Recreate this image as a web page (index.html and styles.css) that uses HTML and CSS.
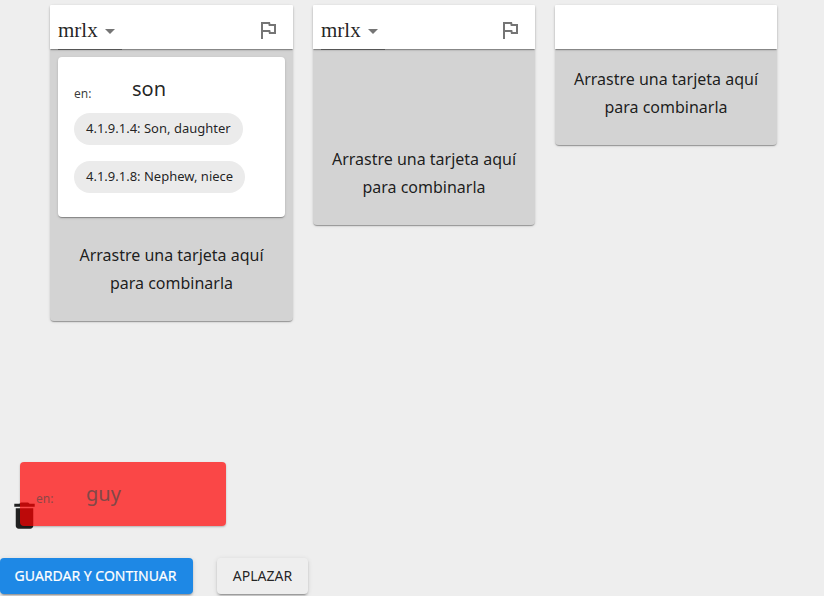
FILE: index.html
```
<!DOCTYPE html>
<html lang="es">
<head>
<meta charset="utf-8">
<title>Combinar duplicados</title>
<link rel="stylesheet" href="styles.css">
</head>
<body>
<main class="board">
  <section class="column first">
    <header class="bar">
      <div class="select">mrlx<svg viewBox="0 0 24 24"><path d="M7 10l5 5 5-5z"/></svg></div>
      <svg class="flag" viewBox="0 0 24 24"><path d="M12.36 6l.4 2H18v6h-3.36l-.4-2H7V6h5.36M14 4H5v17h2v-7h5.6l.4 2h7V6h-5.6L14 4z"/></svg>
    </header>
    <article class="card">
      <div class="gloss"><span class="lang">en:</span><span class="word">son</span></div>
      <div class="chip">4.1.9.1.4: Son, daughter</div>
      <div class="chip">4.1.9.1.8: Nephew, niece</div>
    </article>
    <p class="hint">Arrastre una tarjeta aquí<br>para combinarla</p>
  </section>
  <section class="column second">
    <header class="bar">
      <div class="select">mrlx<svg viewBox="0 0 24 24"><path d="M7 10l5 5 5-5z"/></svg></div>
      <svg class="flag" viewBox="0 0 24 24"><path d="M12.36 6l.4 2H18v6h-3.36l-.4-2H7V6h5.36M14 4H5v17h2v-7h5.6l.4 2h7V6h-5.6L14 4z"/></svg>
    </header>
    <p class="hint">Arrastre una tarjeta aquí<br>para combinarla</p>
  </section>
  <section class="column third">
    <header class="bar"></header>
    <p class="hint">Arrastre una tarjeta aquí<br>para combinarla</p>
  </section>
</main>
<div class="discard">
  <svg class="trash" viewBox="0 0 24 24"><path d="M6 19c0 1.1.9 2 2 2h8c1.1 0 2-.9 2-2V7H6v12zM19 4h-3.500l-1-1h-5l-1 1H5v2h14V4z"/></svg>
  <article class="dragged"><span class="lang">en:</span><span class="word">guy</span></article>
</div>
<footer class="actions">
  <button class="save">GUARDAR Y CONTINUAR</button>
  <button class="defer">APLAZAR</button>
</footer>
</body>
</html>
```
FILE: styles.css
```
* { box-sizing: border-box; }
body {
  margin: 0;
  height: 596px;
  overflow: hidden;
  background: #eee;
  color: rgba(0, 0, 0, .87);
  font-family: "Noto Sans", sans-serif;
  display: flex;
  flex-direction: column;
}
.board {
  display: flex;
  flex-shrink: 0;
  align-items: flex-start;
  gap: 20px;
  height: 462px;
  padding: 5px 0 0 50px;
}
.column {
  width: 222px;
  background: #d3d3d3;
  border-radius: 4px;
  box-shadow: 0 2px 1px -1px rgba(0,0,0,.2), 0 1px 1px rgba(0,0,0,.14), 0 1px 3px rgba(0,0,0,.12);
}
.first { width: 243px; height: 316px; }
.second { height: 220px; }
.third { height: 140px; }
.bar {
  display: flex;
  justify-content: space-between;
  align-items: flex-end;
  height: 44px;
  padding: 0 13px 0 8px;
  background: #fff;
  border-radius: 1px 1px 0 0;
  box-shadow: 0 2px 1px -1px rgba(0,0,0,.2), 0 1px 1px rgba(0,0,0,.14), 0 1px 3px rgba(0,0,0,.12);
}
.select {
  display: flex;
  align-items: center;
  height: 38px;
  width: 64px;
  margin-bottom: -1px;
  border-bottom: 1px solid #555;
  font: 21px "Liberation Serif", serif;
}
.select svg { width: 24px; height: 24px; fill: #757575; }
.flag { width: 24px; height: 24px; margin-bottom: 7px; fill: #757575; }
.card {
  margin: 8px 8px 0;
  height: 160px;
  padding: 16px;
  background: #fff;
  border-radius: 4px;
  box-shadow: 0 2px 1px -1px rgba(0,0,0,.2), 0 1px 1px rgba(0,0,0,.14), 0 1px 3px rgba(0,0,0,.12);
}
.gloss { display: flex; height: 40px; line-height: 32px; }
.lang { width: 58px; padding-top: 5px; font-size: 12px; opacity: .9; }
.word { font-size: 20px; }
.chip {
  width: max-content;
  height: 32px;
  padding: 0 12px;
  margin-bottom: 16px;
  border-radius: 16px;
  background: #ebebeb;
  font-size: 13px;
  line-height: 30px;
}
.hint { margin: 24px 0 0; text-align: center; font-size: 16px; line-height: 28px; }
.second .hint { margin-top: 96px; }
.third .hint { margin-top: 16px; }
.discard { position: relative; flex-shrink: 0; height: 96px; padding-left: 20px; }
.trash { position: absolute; left: 7px; top: 36px; width: 35px; height: 35px; fill: #212121; }
.dragged {
  position: relative;
  display: flex;
  width: 206px;
  height: 64px;
  padding: 16px;
  line-height: 32px;
  border-radius: 4px;
  background: rgba(255, 0, 0, .7);
  box-shadow: 0 1px 2px rgba(0,0,0,.25);
  color: #824848;
}
.dragged .lang { width: 50px; }
.actions { display: flex; flex-shrink: 0; gap: 24px; }
button {
  height: 36px;
  padding: 0;
  border: 0;
  border-radius: 4px;
  font: 400 14px/24px "Noto Sans", sans-serif;
  box-shadow: 0 3px 1px -2px rgba(0,0,0,.2), 0 2px 2px rgba(0,0,0,.14), 0 1px 5px rgba(0,0,0,.12);
}
.save { width: 193px; padding-right: 2px; background: #1e88e5; color: #fff; -webkit-text-stroke: .2px #fff; }
.defer { width: 91px; background: #eee; color: rgba(0,0,0,.87); }
```
